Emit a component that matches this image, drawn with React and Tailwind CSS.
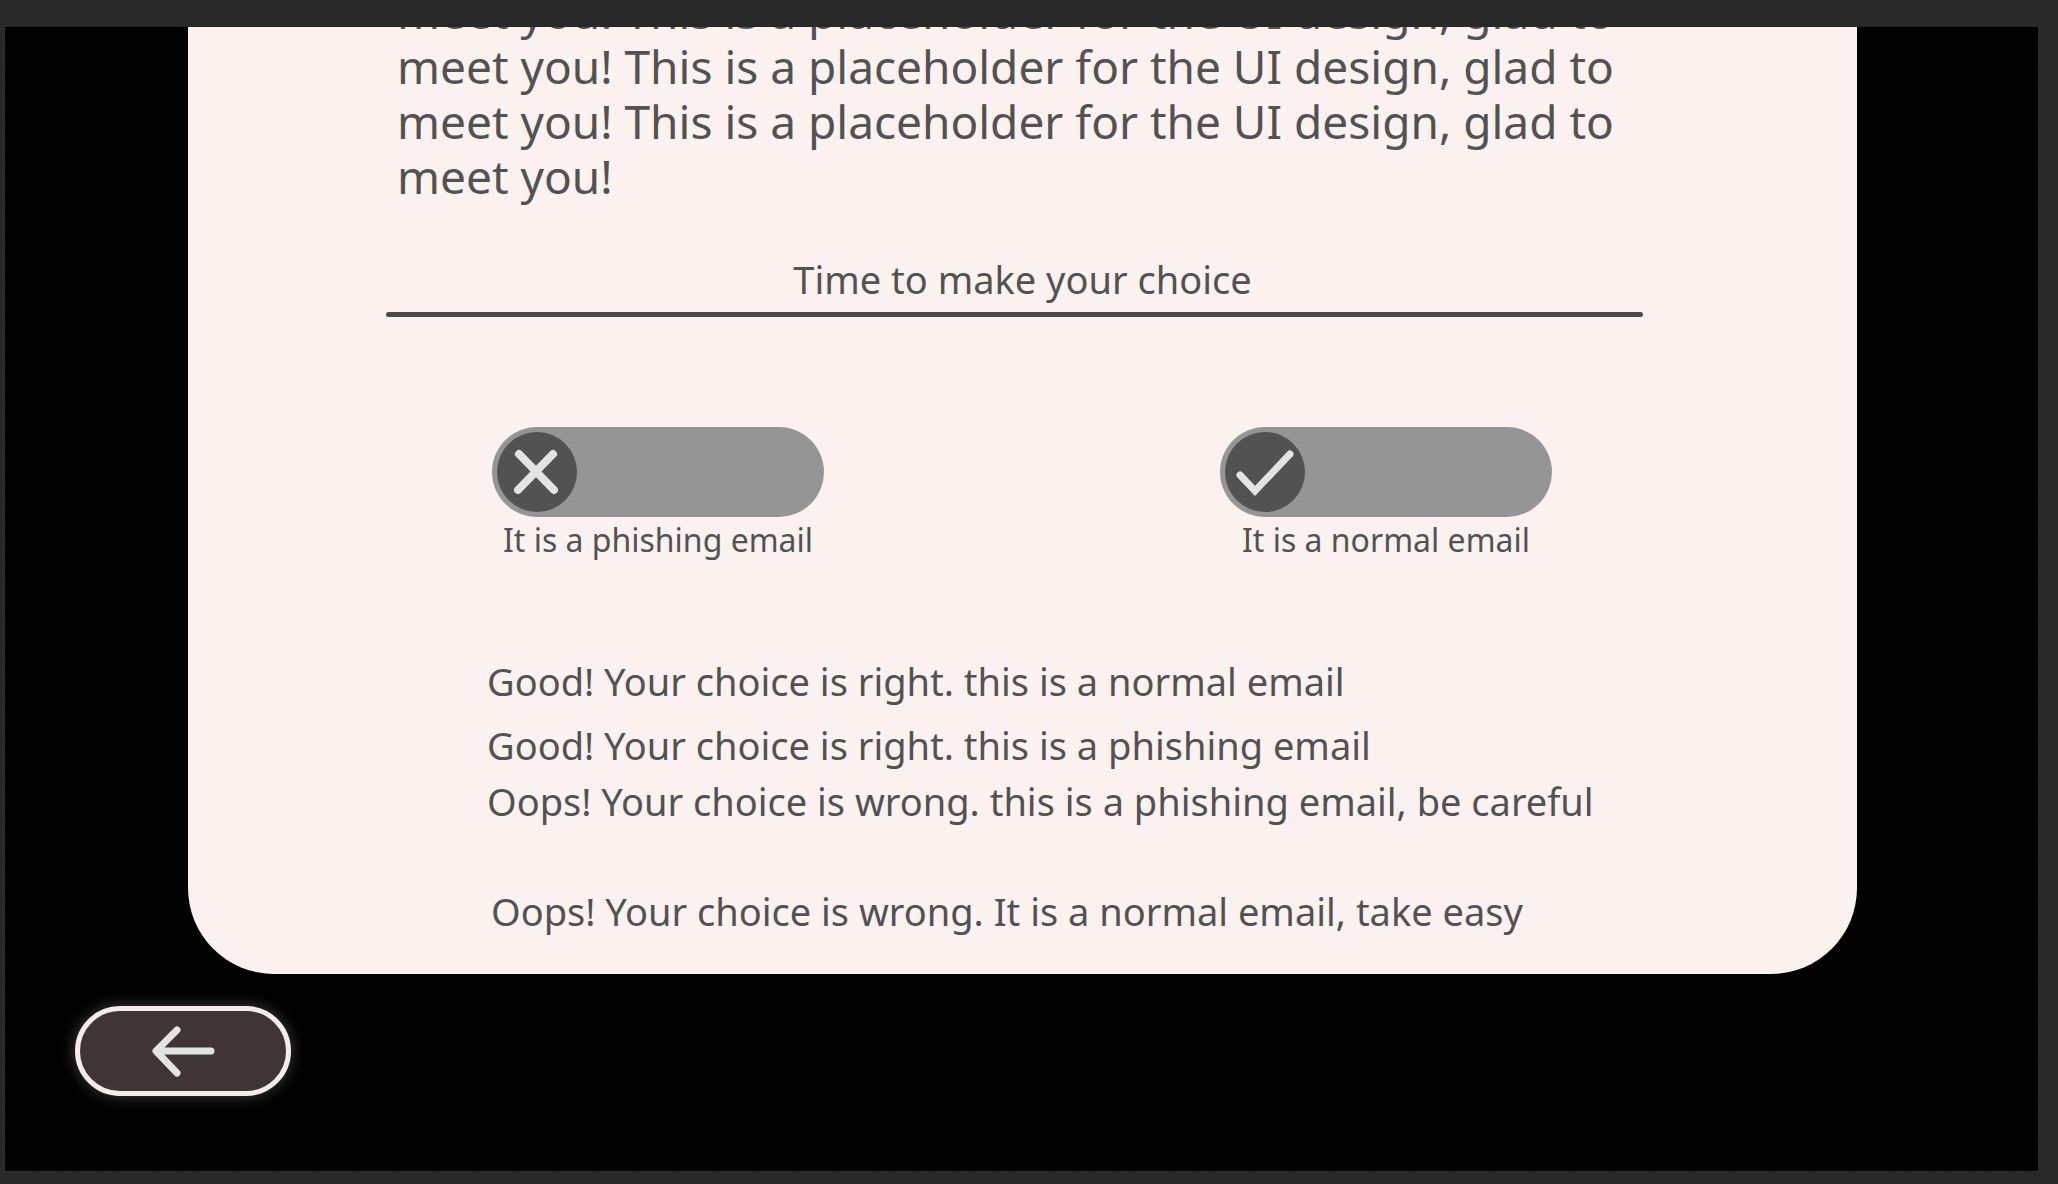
const sentence = "meet you! This is a placeholder for the UI design, glad to ";
const message = sentence.repeat(3) + "meet you!";

function Choice({ label, children }) {
  return (
    <label className="flex w-[332px] cursor-pointer flex-col items-center">
      <input type="checkbox" role="switch" className="peer sr-only" />
      <span className="flex h-[90px] w-full rounded-full bg-[#959595] p-[5px] peer-checked:justify-end">
        <span className="flex size-20 items-center justify-center rounded-full bg-[#525252]">
          <svg
            viewBox="0 0 80 80"
            className="size-20 fill-none stroke-[#e3e3e3]"
            strokeLinecap="round"
            aria-hidden="true"
          >
            {children}
          </svg>
        </span>
      </span>
      <span className="text-[32px] leading-[46px] whitespace-nowrap">{label}</span>
    </label>
  );
}

export default function App() {
  return (
    <div className="flex min-h-screen flex-col bg-[#282828] pt-[27px] pr-[19px] pb-[12px] pl-[4px] font-['Noto_Sans','Open_Sans',sans-serif] text-[#525252]">
      <main className="flex flex-1 flex-col border border-t-0 border-dashed border-[#333333] bg-black bg-clip-padding">
        <article className="mr-[181px] ml-[183px] flex flex-col rounded-b-[86px] bg-[#fbf2f0] pb-[35px]">
          <div className="mr-[214px] ml-[205px] flex h-[184px] flex-col justify-end overflow-hidden pb-[7px] pl-1">
            <p className="text-[46px] leading-[55px]">{message}</p>
          </div>
          <h2 className="mt-10 text-center text-[38px] leading-[56px]">Time to make your choice</h2>
          <hr className="mt-[5px] mr-[214px] ml-[198px] h-[5px] rounded-full border-0 bg-[#4a4a4a]" />
          <div className="mt-[110px] mr-[305px] ml-[304px] flex justify-between">
            <Choice label="It is a phishing email">
              <path d="M22 22L57 58M56 22L21 58" strokeWidth="8" />
            </Choice>
            <Choice label="It is a normal email">
              <path d="M15 43L30 59L65 22" strokeWidth="7" strokeLinejoin="miter" />
            </Choice>
          </div>
          <div className="mt-[90px] ml-[299px] text-[38px] leading-[56px] whitespace-nowrap">
            <p>Good! Your choice is right. this is a normal email</p>
            <p className="mt-2">Good! Your choice is right. this is a phishing email</p>
            <p>Oops! Your choice is wrong. this is a phishing email, be careful</p>
            <p className="mt-[54px] pl-1">Oops! Your choice is wrong. It is a normal email, take easy</p>
          </div>
        </article>
        <button
          type="button"
          aria-label="Back"
          className="mt-8 ml-[70px] flex h-[90px] w-[216px] items-center justify-center rounded-full border-[5px] border-[#f4eceb] bg-[#3f3536] shadow-[0_0_16px_rgba(255,255,255,0.25)]"
        >
          <svg
            viewBox="0 0 64 52"
            className="h-[52px] w-16 fill-none stroke-[#e3e3e3]"
            strokeWidth="7"
            strokeLinecap="round"
            strokeLinejoin="round"
            aria-hidden="true"
          >
            <path d="M26 5L5 26L26 48M6 26H60" />
          </svg>
        </button>
      </main>
    </div>
  );
}
